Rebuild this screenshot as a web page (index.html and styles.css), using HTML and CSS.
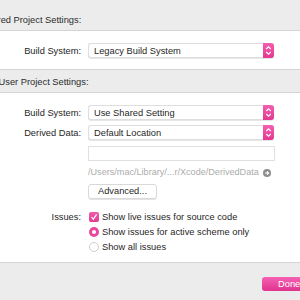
FILE: index.html
```html
<!DOCTYPE html>
<html lang="en">
<head>
    <meta charset="UTF-8">
    <title>Project Settings</title>
    <link rel="stylesheet" href="styles.css">
</head>
<body>
    <div class="dialog">
        <div class="band band-top">Shared Project Settings:</div>

        <div class="section section-shared">
            <div class="row">
                <div class="label">Build System:</div>
                <div class="popup">
                    <span class="popup-text">Legacy Build System</span>
                    <span class="popup-arrows">
                        <svg width="7" height="11" viewBox="0 0 7 11"><path d="M1.2 4 L3.5 1.8 L5.8 4 M1.2 7 L3.5 9.2 L5.8 7" fill="none" stroke="#fff" stroke-width="1.1"/></svg>
                    </span>
                </div>
            </div>
        </div>

        <div class="band band-user">Per-User Project Settings:</div>

        <div class="section section-user">
            <div class="row">
                <div class="label">Build System:</div>
                <div class="popup">
                    <span class="popup-text">Use Shared Setting</span>
                    <span class="popup-arrows">
                        <svg width="7" height="11" viewBox="0 0 7 11"><path d="M1.2 4 L3.5 1.8 L5.8 4 M1.2 7 L3.5 9.2 L5.8 7" fill="none" stroke="#fff" stroke-width="1.1"/></svg>
                    </span>
                </div>
            </div>
            <div class="row row-derived">
                <div class="label">Derived Data:</div>
                <div class="popup">
                    <span class="popup-text">Default Location</span>
                    <span class="popup-arrows">
                        <svg width="7" height="11" viewBox="0 0 7 11"><path d="M1.2 4 L3.5 1.8 L5.8 4 M1.2 7 L3.5 9.2 L5.8 7" fill="none" stroke="#fff" stroke-width="1.1"/></svg>
                    </span>
                </div>
            </div>
            <div class="row row-field">
                <div class="label"></div>
                <div class="textfield"></div>
            </div>
            <div class="row row-path">
                <div class="label"></div>
                <div class="path">
                    <span class="path-text">/Users/mac/Library/...r/Xcode/DerivedData</span>
                    <svg class="path-arrow" width="8" height="8" viewBox="0 0 8 8"><circle cx="4" cy="4" r="4" fill="#8d8d8d"/><path d="M2 4 H5.6 M4 2.3 L5.7 4 L4 5.7" fill="none" stroke="#fff" stroke-width="1.1"/></svg>
                </div>
            </div>
            <div class="row row-advanced">
                <div class="label"></div>
                <div class="button">Advanced...</div>
            </div>
            <div class="row row-issues">
                <div class="label">Issues:</div>
                <div class="option">
                    <span class="checkbox">
                        <svg width="10" height="10" viewBox="0 0 10 10"><path d="M2.6 5.2 L4.3 7.3 L7.6 2.4" fill="none" stroke="#fff" stroke-width="1.2"/></svg>
                    </span>
                    Show live issues for source code
                </div>
            </div>
            <div class="row row-option">
                <div class="label"></div>
                <div class="option"><span class="radio radio-on"></span>Show issues for active scheme only</div>
            </div>
            <div class="row row-option">
                <div class="label"></div>
                <div class="option"><span class="radio"></span>Show all issues</div>
            </div>
        </div>

        <div class="footer">
            <div class="done">Done</div>
        </div>
    </div>
</body>
</html>
```

FILE: styles.css
```css
html, body {
    margin: 0;
    padding: 0;
    width: 300px;
    height: 300px;
    overflow: hidden;
    background-color: #ececec;
}
body {
    font-family: "Liberation Sans", Arial, sans-serif;
    font-size: 9.3px;
    color: #262626;
}
.dialog {
    margin-left: -20px;
    width: 340px;
}
.band {
    background-color: #ececec;
    border-bottom: 1px solid #d4d4d4;
    padding-left: 1px;
    line-height: 14px;
    color: #2b2b2b;
}
.band-top {
    height: 31px;
    box-sizing: border-box;
    padding-top: 13px;
}
.band-user {
    height: 24px;
    box-sizing: border-box;
    padding-top: 5px;
    border-top: 1px solid #d4d4d4;
}
.section {
    background-color: #fff;
}
.section-shared {
    padding: 12px 0 11px;
}
.section-user {
    padding: 12px 0 8px;
    border-bottom: 1px solid #d4d4d4;
}
.row {
    display: flex;
    align-items: center;
}
.label {
    width: 101px;
    margin-right: 7px;
    text-align: right;
    flex-shrink: 0;
}
.popup {
    width: 186px;
    height: 15px;
    box-sizing: border-box;
    display: flex;
    align-items: center;
    justify-content: space-between;
    border: 1px solid #dedede;
    border-right: none;
    border-radius: 3px;
    box-shadow: 0 1px 0 #e6e6e6;
    background-color: #fff;
}
.popup-text {
    padding-left: 5px;
    color: #1f1f1f;
}
.popup-arrows {
    width: 11px;
    height: 15px;
    margin-top: -1px;
    margin-bottom: -1px;
    display: flex;
    align-items: center;
    justify-content: center;
    border-radius: 0 3px 3px 0;
    background: linear-gradient(#f35eb1, #e3388f);
}
.row-derived {
    margin-top: 5px;
}
.row-field {
    margin-top: 6px;
}
.textfield {
    width: 187px;
    height: 15px;
    box-sizing: border-box;
    border: 1px solid #e0e0e0;
    background-color: #fff;
}
.row-path {
    margin-top: 4px;
    height: 14px;
}
.path {
    width: 186px;
    display: flex;
    align-items: center;
    justify-content: space-between;
    color: #acacac;
}
.path-text {
    font-size: 9.1px;
}
.path-arrow {
    margin-right: 3px;
    margin-top: 1px;
}
.row-advanced {
    margin-top: 5px;
}
.button {
    width: 69px;
    height: 15px;
    box-sizing: border-box;
    border: 1px solid #d9d9d9;
    border-radius: 3px;
    box-shadow: 0 1px 0 #e4e4e4;
    text-align: center;
    line-height: 13px;
    color: #1f1f1f;
}
.row-issues {
    margin-top: 10px;
    height: 15px;
}
.row-option {
    height: 15px;
}
.option {
    display: flex;
    align-items: center;
    color: #1f1f1f;
}
.checkbox {
    width: 10px;
    height: 10px;
    margin: 0 3px 0 1px;
    border-radius: 2px;
    background: linear-gradient(#f05bae, #e33a91);
    display: flex;
}
.radio {
    width: 10px;
    height: 10px;
    box-sizing: border-box;
    margin: 0 3px 0 1px;
    border-radius: 50%;
    border: 1px solid #cfcfcf;
    background-color: #fff;
}
.radio-on {
    border: 3px solid #e8479c;
    background-color: #fff;
}
.footer {
    height: 40px;
    box-sizing: border-box;
    padding: 14px 0 0 282px;
    background-color: #ececec;
}
.done {
    width: 56px;
    height: 14px;
    line-height: 14px;
    padding-left: 16px;
    border-radius: 3px;
    color: #fff;
    background: linear-gradient(#f461b3, #e0338d);
}
```
